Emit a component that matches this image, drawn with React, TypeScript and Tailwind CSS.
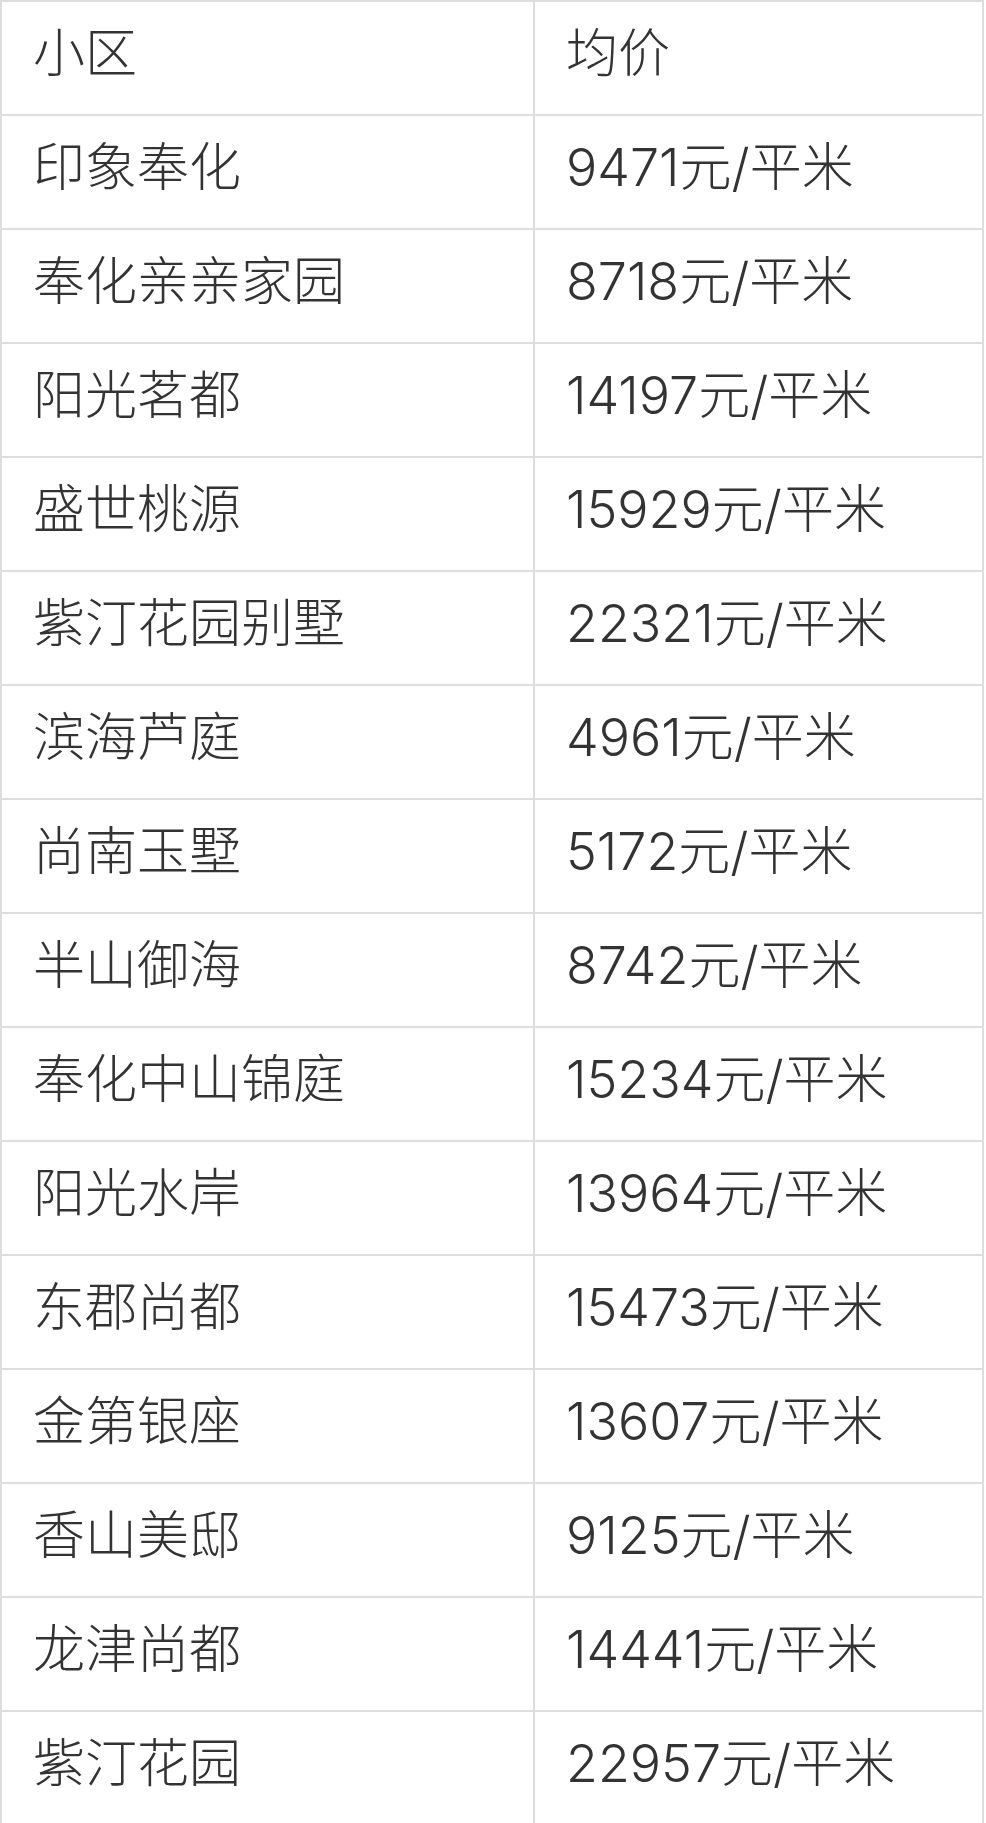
import React from "react";

const rows: [string, string][] = [
  ["印象奉化", "9471元/平米"],
  ["奉化亲亲家园", "8718元/平米"],
  ["阳光茗都", "14197元/平米"],
  ["盛世桃源", "15929元/平米"],
  ["紫汀花园别墅", "22321元/平米"],
  ["滨海芦庭", "4961元/平米"],
  ["尚南玉墅", "5172元/平米"],
  ["半山御海", "8742元/平米"],
  ["奉化中山锦庭", "15234元/平米"],
  ["阳光水岸", "13964元/平米"],
  ["东郡尚都", "15473元/平米"],
  ["金第银座", "13607元/平米"],
  ["香山美邸", "9125元/平米"],
  ["龙津尚都", "14441元/平米"],
  ["紫汀花园", "22957元/平米"],
];

function Row({ a, b }: { a: string; b: string }) {
  return (
    <div className="flex h-[114px] border-b-2 border-[#dddddd]">
      <div className="w-[533px] border-r-2 border-[#dddddd] flex items-center pl-[31px] pb-[8px]">
        {a}
      </div>
      <div className="flex-1 border-r-2 border-[#dddddd] flex items-center pl-[31px] pb-[8px]">
        {b}
      </div>
    </div>
  );
}

export default function App() {
  return (
    <div
      className="w-[986px] bg-white text-[#333333] text-[52px] font-light leading-none"
      style={{ fontFamily: 'Inter, "Noto Sans CJK SC", "Noto Sans", sans-serif' }}
    >
      <div className="w-[984px] border-l-2 border-t-2 border-[#dddddd]">
        <Row a="小区" b="均价" />
        {rows.map(([a, b]) => (
          <Row key={a} a={a} b={b} />
        ))}
      </div>
    </div>
  );
}
